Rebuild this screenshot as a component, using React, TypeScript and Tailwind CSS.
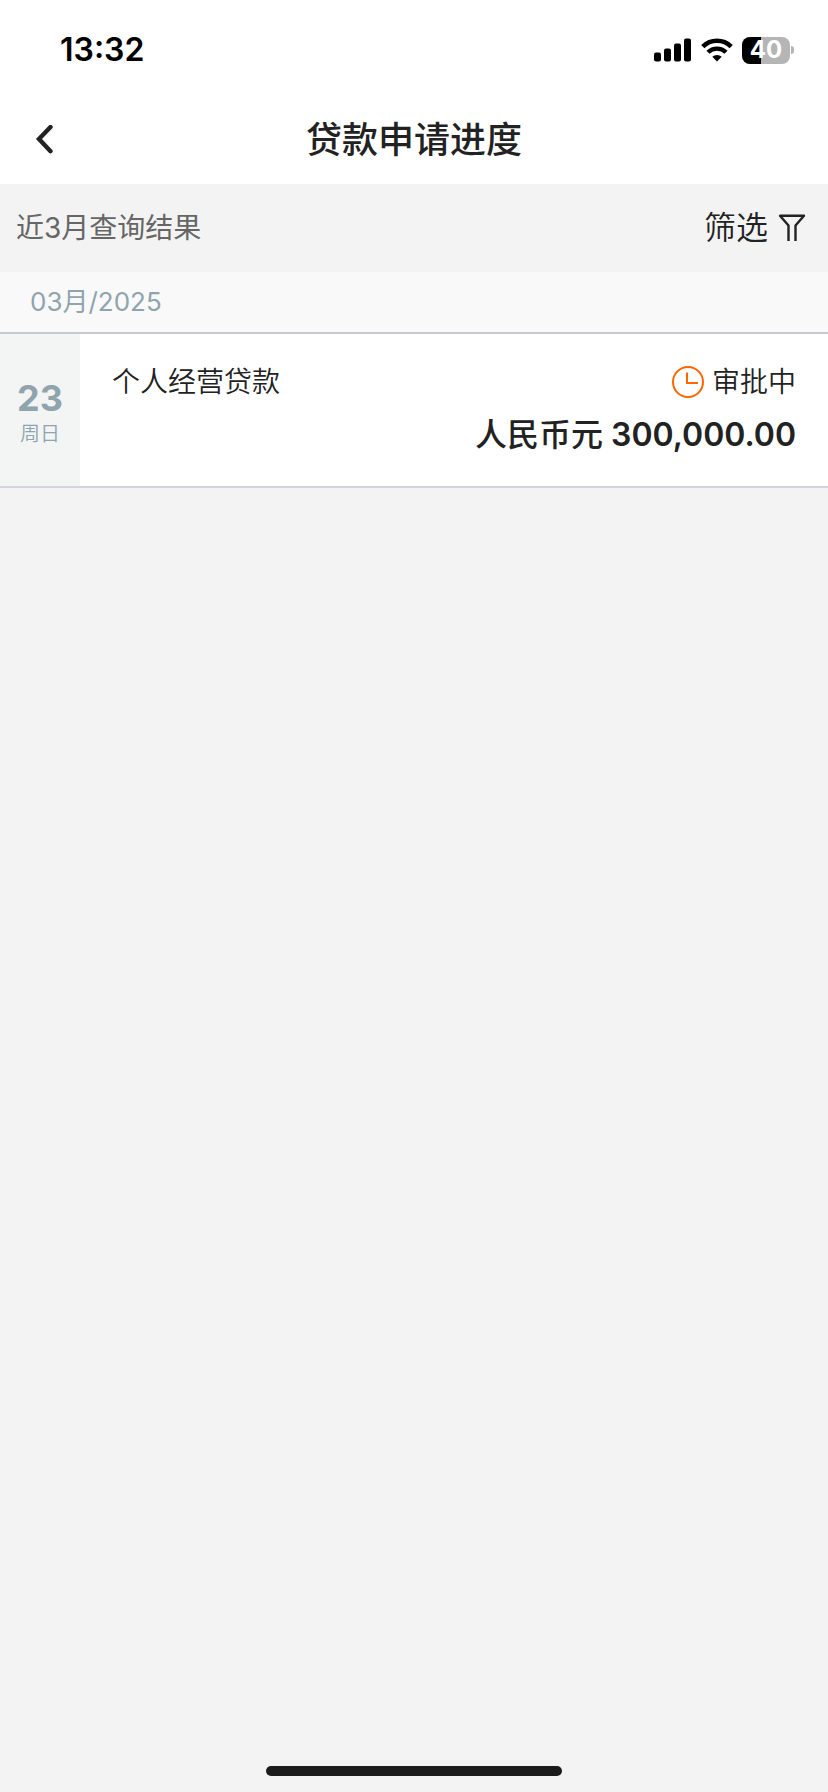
type LoanRecord = {
    id: number;
    day: string;
    weekday: string;
    name: string;
    status: string;
    currency: string;
    amount: string;
};

const groups: { month: string; records: LoanRecord[] }[] = [
    {
        month: "03月/2025",
        records: [
            {
                id: 1,
                day: "23",
                weekday: "周日",
                name: "个人经营贷款",
                status: "审批中",
                currency: "人民币元",
                amount: "300,000.00",
            },
        ],
    },
];

function SignalIcon() {
    return (
        <svg width="38" height="24" viewBox="0 0 38 24" fill="#000" aria-hidden="true">
            <rect x="0" y="14.5" width="7" height="9" rx="2" />
            <rect x="10" y="10.5" width="7" height="13" rx="2" />
            <rect x="20" y="5.5" width="7" height="18" rx="2" />
            <rect x="30" y="0.5" width="7" height="23" rx="2" />
        </svg>
    );
}

function WifiIcon() {
    return (
        <svg width="32" height="24" viewBox="0 0 32 24" fill="none" aria-hidden="true">
            <path d="M1.8 8.6a20.2 20.2 0 0 1 28.4 0" stroke="#000" strokeWidth="4.6" />
            <path d="M7 14.3a12.8 12.8 0 0 1 18 0" stroke="#000" strokeWidth="4.4" />
            <path d="M16 23.6l-4.7-4.8a6.8 6.8 0 0 1 9.4 0z" fill="#000" />
        </svg>
    );
}

function Battery({ level }: { level: number }) {
    return (
        <div className="flex items-center gap-px">
            <div className="relative flex h-[27px] w-12 items-center justify-center overflow-hidden rounded-lg bg-[#b5b5b5]">
                <div className="absolute inset-y-0 left-0 bg-black" style={{ width: `${level}%` }} />
                <span className="relative text-2xl leading-6 font-bold text-white">{level}</span>
            </div>
            <div className="h-2 w-[3px] rounded-r-full bg-[#b5b5b5]" />
        </div>
    );
}

function StatusBar() {
    return (
        <div className="flex h-[100px] items-center justify-between pr-[34px] pl-[60px]">
            <span className="text-[32px] leading-10 font-semibold text-black">13:32</span>
            <div className="flex items-center gap-[9px]">
                <SignalIcon />
                <WifiIcon />
                <Battery level={40} />
            </div>
        </div>
    );
}

function RecordRow({ record }: { record: LoanRecord }) {
    return (
        <li className="flex border-b-2 border-[#d4d4de] bg-white">
            <div className="flex w-20 flex-col items-center justify-center bg-[#f3f5f5] pt-2 text-[#90a4ae]">
                <span className="text-4xl leading-10 font-bold">{record.day}</span>
                <span className="text-xl leading-8 font-[350]">{record.weekday}</span>
            </div>
            <div className="flex-1 pt-7 pr-8 pb-7 pl-8">
                <div className="flex items-center justify-between text-[28px] leading-10 font-[350]">
                    <span>{record.name}</span>
                    <span className="flex items-center gap-2">
                        <svg width="32" height="32" viewBox="0 0 32 32" fill="none" stroke="#ff6600" strokeWidth="2" aria-hidden="true">
                            <circle cx="16" cy="16" r="15" />
                            <path d="M15 6.5V17h11" />
                        </svg>
                        {record.status}
                    </span>
                </div>
                <p className="mt-[10px] text-right text-[32px] leading-[46px] font-semibold">
                    <span className="font-medium">{record.currency}</span> {record.amount}
                </p>
            </div>
        </li>
    );
}

export default function App() {
    return (
        <div className="flex min-h-screen flex-col bg-[#f3f3f3] font-['Inter','Noto_Sans_CJK_SC',sans-serif] text-[#222222]">
            <div className="bg-white">
                <StatusBar />
                <header className="grid h-[84px] grid-cols-[1fr_auto_1fr] items-center pb-1">
                    <button type="button" aria-label="返回" className="w-16 py-2 pl-[35px]">
                        <svg width="18" height="30" viewBox="0 0 18 30" fill="none" stroke="#222" strokeWidth="4.4" strokeLinecap="round" strokeLinejoin="miter" aria-hidden="true">
                            <path d="M15.5 2L4 14l11.5 12.2" />
                        </svg>
                    </button>
                    <h1 className="text-4xl leading-[48px] font-medium">贷款申请进度</h1>
                </header>
            </div>

            <div className="flex h-[88px] items-center justify-between pr-[22px] pl-4">
                <span className="text-[28px] leading-10 font-[370] text-[#666666]">近3月查询结果</span>
                <button type="button" className="flex items-center gap-[10px] text-[32px] leading-10 font-[350]">
                    筛选
                    <svg width="28" height="28" viewBox="0 0 28 28" fill="none" stroke="#222" strokeWidth="2.4" strokeLinejoin="round" aria-hidden="true">
                        <path d="M10.5 27V11.5L2 1.8h24l-8.5 9.7V27" />
                    </svg>
                </button>
            </div>

            <main className="flex-1">
                {groups.map((group) => (
                    <section key={group.month}>
                        <h2 className="border-b-2 border-[#c8c8d6] bg-[#f9f9f9] py-[10px] pl-[30px] text-[26px] leading-10 font-[370] text-[#90a4ae]">
                            {group.month}
                        </h2>
                        <ul>
                            {group.records.map((record) => (
                                <RecordRow key={record.id} record={record} />
                            ))}
                        </ul>
                    </section>
                ))}
            </main>

            <div className="flex justify-center pb-4">
                <div className="h-[10px] w-[296px] rounded-full bg-[#1b1b1b]" />
            </div>
        </div>
    );
}
